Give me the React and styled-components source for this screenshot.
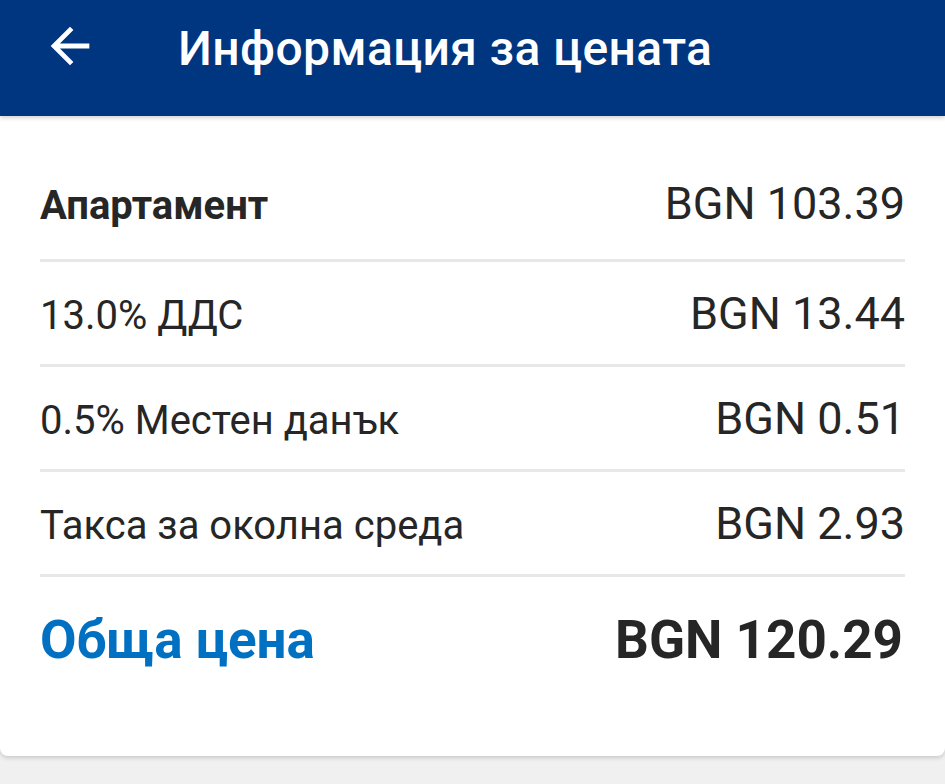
import React from "react";
import styled, { createGlobalStyle } from "styled-components";

const GlobalStyle = createGlobalStyle`
	html, body {
		margin: 0;
		padding: 0;
		background: #f0f0f0;
		font-family: Roboto, "Noto Sans", "Liberation Sans", sans-serif;
	}
`;

const Page = styled.div`
	min-height: 100vh;
	background: #f0f0f0;
	display: flex;
	flex-direction: column;
`;

const Toolbar = styled.header`
	position: relative;
	z-index: 2;
	height: 116px;
	box-sizing: border-box;
	background: #003580;
	display: flex;
	align-items: flex-start;
	padding: 17px 40px 0 41px;
	box-shadow: 0 2px 4px rgba(0, 0, 0, 0.18);
`;

const BackButton = styled.button`
	width: 58px;
	height: 58px;
	padding: 0;
	border: none;
	background: transparent;
	color: #fff;
	display: flex;
	align-items: center;
	justify-content: center;
	cursor: pointer;
`;

const Title = styled.h1`
	margin: 4px 0 0 79px;
	font-size: 48px;
	line-height: 56px;
	font-weight: 500;
	color: #fff;
	letter-spacing: 0.4px;
`;

const Card = styled.section`
	background: #fff;
	padding: 34px 40px 0;
	border-radius: 0 0 8px 8px;
	box-shadow: 0 2px 4px rgba(0, 0, 0, 0.16);
`;

const Row = styled.div`
	display: flex;
	justify-content: space-between;
	align-items: baseline;
	padding: ${props => (props.$total ? "33px 0 86px" : props.$first ? "30px 0 29px" : "28px 0 24px")};
	border-bottom: ${props => (props.$total ? "none" : "3px solid #e8e8e8")};
`;

const Label = styled.span`
	font-size: ${props => (props.$total ? "53px" : "40px")};
	line-height: ${props => (props.$total ? "60px" : "48px")};
	font-weight: ${props => (props.$bold ? 700 : 400)};
	color: ${props => (props.$total ? "#0071c2" : "#262626")};
`;

const Amount = styled.span`
	font-size: ${props => (props.$total ? "53px" : "45px")};
	line-height: ${props => (props.$total ? "60px" : "48px")};
	font-weight: ${props => (props.$total ? 700 : 400)};
	color: #262626;
	margin-right: ${props => (props.$total ? "2px" : "0")};
`;

const ArrowBack = () => (
	<svg width="58" height="58" viewBox="0 0 24 24" fill="currentColor">
		<path d="M20 11H7.83l5.59-5.59L12 4l-8 8 8 8 1.41-1.41L7.83 13H20v-2z" />
	</svg>
);

const items = [
	{ label: "Апартамент", amount: "BGN 103.39", bold: true },
	{ label: "13.0% ДДС", amount: "BGN 13.44" },
	{ label: "0.5% Местен данък", amount: "BGN 0.51" },
	{ label: "Такса за околна среда", amount: "BGN 2.93" }
];

export default function App() {
	return (
		<Page>
			<GlobalStyle />
			<Toolbar>
				<BackButton aria-label="Назад"><ArrowBack /></BackButton>
				<Title>Информация за цената</Title>
			</Toolbar>
			<Card>
				{items.map((item, i) => (
					<Row key={item.label} $first={i === 0}>
						<Label $bold={item.bold}>{item.label}</Label>
						<Amount>{item.amount}</Amount>
					</Row>
				))}
				<Row $total>
					<Label $total $bold>Обща цена</Label>
					<Amount $total>BGN 120.29</Amount>
				</Row>
			</Card>
		</Page>
	);
}
